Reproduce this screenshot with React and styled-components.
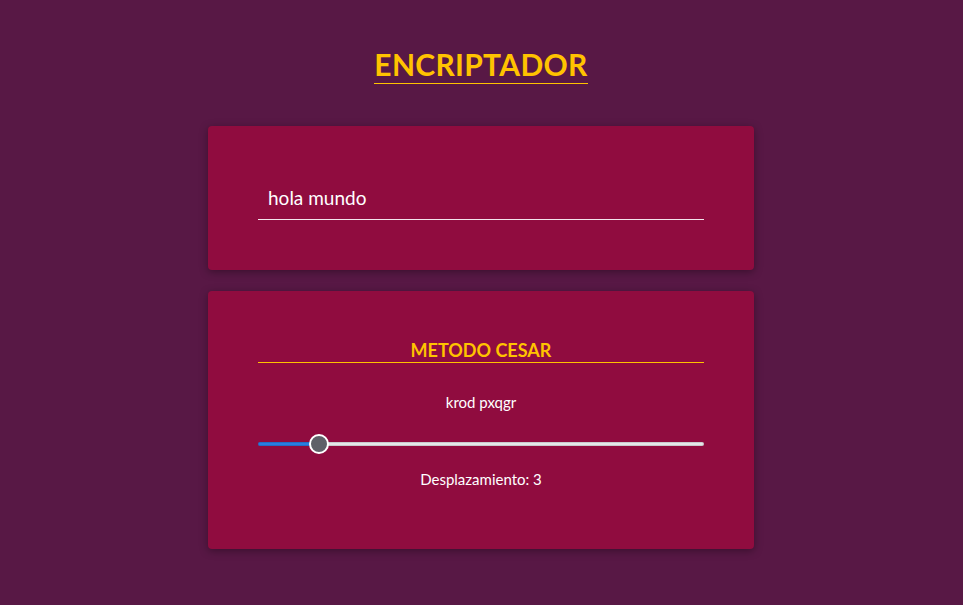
import React, { useState } from "react";
import styled, { createGlobalStyle } from "styled-components";

const GlobalStyle = createGlobalStyle`
    html, body {
        margin: 0;
        padding: 0;
        background: #581845;
        font-family: "Lato", "Open Sans", sans-serif;
    }
`;

const Page = styled.div`
    min-height: 605px;
    display: flex;
    flex-direction: column;
    align-items: center;
    padding: 46px 1px 0 0;
    box-sizing: border-box;
`;

const Title = styled.h1`
    margin: 0 0 42px;
    font-size: 30px;
    font-weight: 700;
    color: #ffc300;
    line-height: 36px;
    padding-bottom: 1px;
    border-bottom: 1px solid #ffc300;
    letter-spacing: 0.3px;
`;

const Card = styled.section`
    width: 546px;
    box-sizing: border-box;
    background: #900c3f;
    border-radius: 4px;
    box-shadow: 0 2px 8px rgba(0, 0, 0, 0.35);
    padding: ${props => props.padding};
    margin-bottom: 21px;
    display: flex;
    flex-direction: column;
    align-items: stretch;
    text-align: center;
`;

const TextInput = styled.input`
    background: transparent;
    border: none;
    border-bottom: 1px solid #f3e6ec;
    outline: none;
    color: #fff;
    font-family: inherit;
    font-size: 19px;
    padding: 6px 10px 8px;
    height: 42px;
    box-sizing: border-box;
`;

const MethodTitle = styled.h2`
    margin: 0;
    font-size: 18px;
    font-weight: 700;
    color: #ffc300;
    border-bottom: 1px solid #ffc300;
    line-height: 22px;
    padding-bottom: 1px;
`;

const Output = styled.p`
    margin: 29px 0 0;
    font-size: 15px;
    color: #fff;
    line-height: 20px;
`;

const Slider = styled.input`
    -webkit-appearance: none;
    appearance: none;
    margin: 21px 0 0;
    height: 22px;
    background: transparent;
    width: 100%;

    &::-webkit-slider-runnable-track {
        height: 4px;
        border-radius: 2px;
        background: linear-gradient(
            to right,
            #2a7de1 0,
            #2a7de1 ${props => props.fill}%,
            #e6e6e9 ${props => props.fill}%,
            #e6e6e9 100%
        );
        box-shadow: inset 0 0 0 1px rgba(0, 0, 0, 0.12);
    }

    &::-webkit-slider-thumb {
        -webkit-appearance: none;
        width: 20px;
        height: 20px;
        margin-top: -8px;
        border-radius: 50%;
        background: #5f6068;
        border: 2px solid #fff;
        box-sizing: border-box;
    }
`;

const Shift = styled.p`
    margin: 14px 0 0;
    font-size: 15px;
    color: #fff;
    line-height: 20px;
`;

const caesar = (text, shift) =>
    text.replace(/[a-z]/gi, c => {
        const base = c <= "Z" ? 65 : 97;
        return String.fromCharCode(((c.charCodeAt(0) - base + shift) % 26) + base);
    });

export default function App () {
    const [text, setText] = useState("hola mundo");
    const [shift, setShift] = useState(3);
    const max = 25;
    // thumb center position as fraction of track, so the blue fill ends under it
    const fill = ((10 + (shift / max) * 426) / 446) * 100;

    return (
        <Page>
            <GlobalStyle />
            <Title>ENCRIPTADOR</Title>
            <Card padding="52px 50px 50px">
                <TextInput value={text} onChange={e => setText(e.target.value)} />
            </Card>
            <Card padding="48px 50px 60px">
                <MethodTitle>METODO CESAR</MethodTitle>
                <Output>{caesar(text, shift)}</Output>
                <Slider
                    type="range"
                    min="0"
                    max={max}
                    value={shift}
                    fill={fill}
                    onChange={e => setShift(Number(e.target.value))}
                />
                <Shift>Desplazamiento: {shift}</Shift>
            </Card>
        </Page>
    );
}
